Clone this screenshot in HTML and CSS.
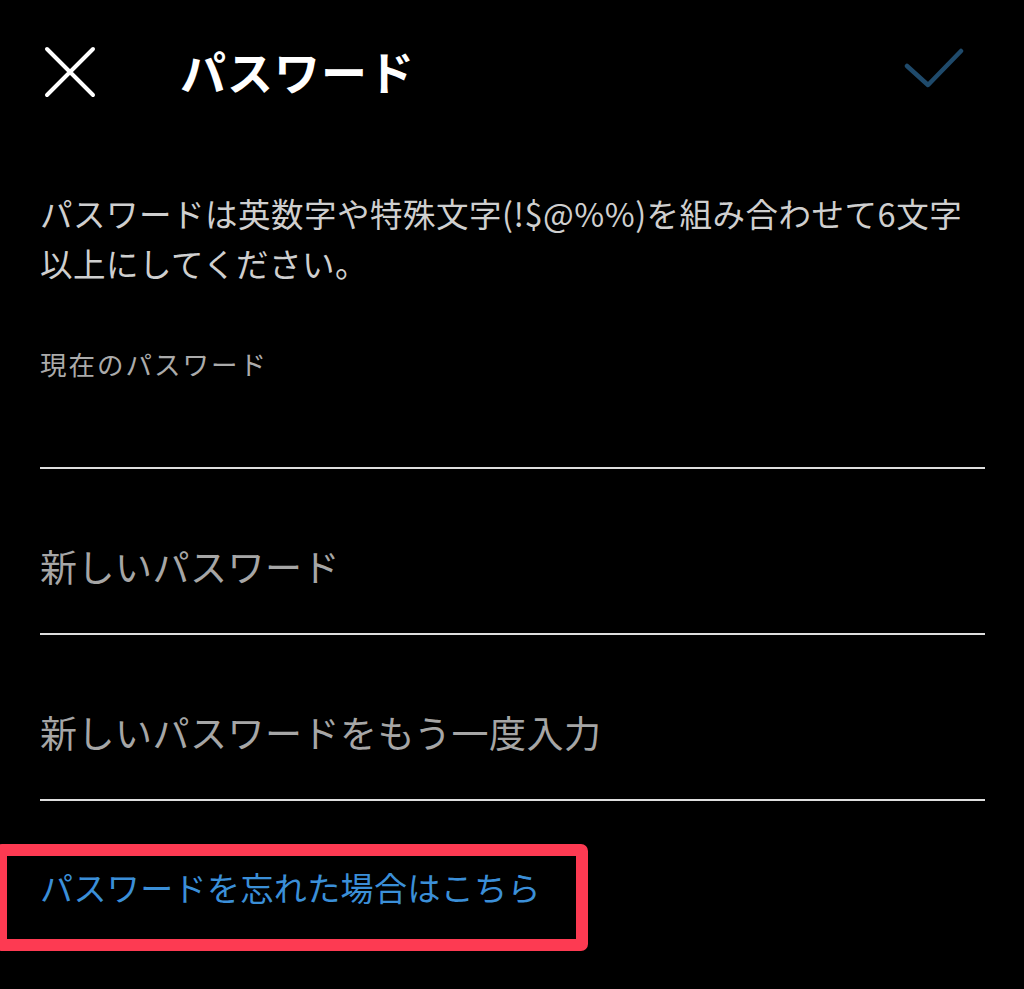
FILE: index.html
```html
<!DOCTYPE html>
<html lang="ja">
<head>
<meta charset="UTF-8">
<meta name="viewport" content="width=device-width, initial-scale=1.0">
<title>パスワード</title>
<link rel="stylesheet" href="styles.css">
</head>
<body>
<header class="topbar">
  <div class="close">
    <svg width="52" height="52" viewBox="0 0 52 52"><path d="M3 3 L49 49 M49 3 L3 49" stroke="#fff" stroke-width="4" stroke-linecap="round" fill="none"/></svg>
  </div>
  <h1 class="title">パスワード</h1>
  <div class="done">
    <svg width="60" height="44" viewBox="0 0 60 44"><path d="M3 19 L24 38 L57 4" stroke="#1f4a6b" stroke-width="4.5" stroke-linecap="round" stroke-linejoin="round" fill="none"/></svg>
  </div>
</header>
<main>
  <p class="hint">パスワードは英数字や特殊文字(!$@%%)を組み合わせて6文字以上にしてください。</p>

  <div class="field first">
    <label>現在のパスワード</label>
    <div class="input"></div>
  </div>
  <div class="field">
    <div class="input"><span class="ph">新しいパスワード</span></div>
  </div>
  <div class="field">
    <div class="input"><span class="ph">新しいパスワードをもう一度入力</span></div>
  </div>

  <a class="forgot" href="#"><span>パスワードを忘れた場合はこちら</span></a>
</main>
</body>
</html>
```

FILE: styles.css
```css
*{box-sizing:border-box; margin:0; padding:0;}
html,body{background:#000;}
body{
  color:#fff; width:1024px; height:989px; overflow:hidden;
  font-family:"Noto Sans CJK JP","Noto Sans",sans-serif;
}
a{text-decoration:none; color:inherit;}

.topbar{display:flex; align-items:center; height:144px; padding:0 60px 0 44px;}
.close{width:52px; height:52px; display:flex;}
.title{font-size:46px; font-weight:700; letter-spacing:1px; margin-left:84px; line-height:1; margin-top:-4px;}
.done{margin-left:auto; display:flex; margin-top:-6px;}

main{padding:0 39px 0 40px;}
.hint{
  margin-top:44px; font-size:32.5px; line-height:50px; color:#cfcfcf;
  letter-spacing:0.5px; width:930px;
}

.field{border-bottom:2px solid #dedede;}
.field.first{margin-top:58px;}
.field label{display:block; font-size:26.5px; line-height:36px; color:#ababab; letter-spacing:2px;}
.field.first .input{height:85px; padding:0;}
.field .input{padding:75px 0 45px;}
.field .ph{display:block; font-size:37px; line-height:44px; color:#a6a6a6; letter-spacing:0.5px;}

.forgot{
  display:block; width:593px; margin:43px 0 0 -45px;
  border:12px solid #fd3a52; border-radius:7px;
  padding:11px 0 32px 33px;
}
.forgot span{display:block; font-size:33px; line-height:40px; color:#3b8fd8; letter-spacing:0.4px;}
```
